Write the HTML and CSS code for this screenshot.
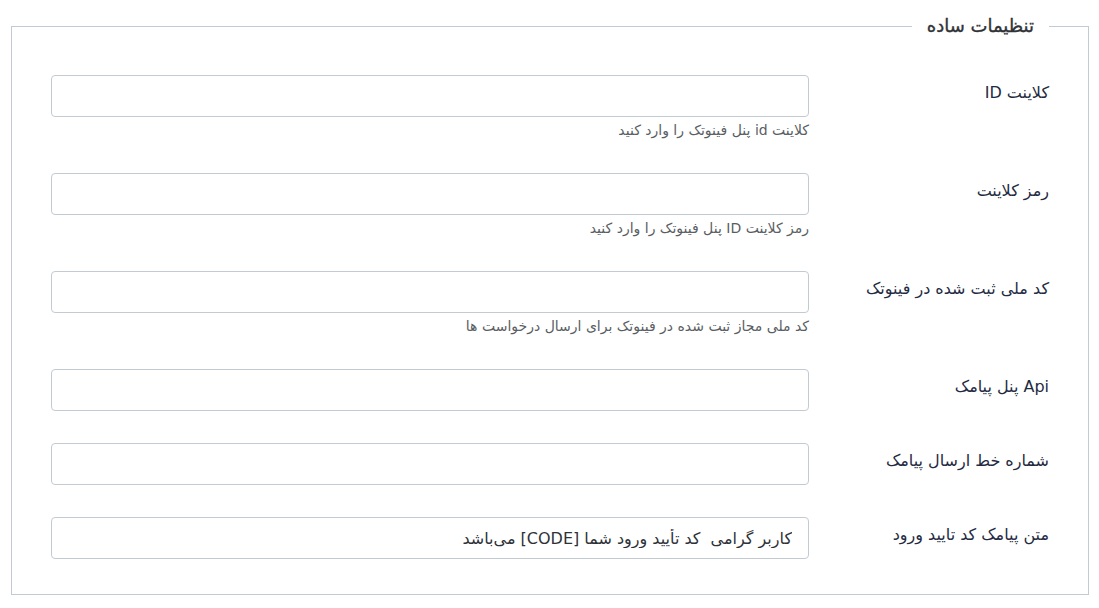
FILE: index.html
```html
<!DOCTYPE html>
<html lang="fa" dir="rtl">
<head>
<meta charset="utf-8">
<title>تنظیمات ساده</title>
<link rel="stylesheet" href="styles.css">
</head>
<body>
<div class="page">
  <fieldset class="box">
    <legend class="box-title">تنظیمات ساده</legend>

    <div class="row">
      <label class="row-label" for="f1">کلاینت ID</label>
      <div class="row-field">
        <input class="text-input" id="f1" type="text">
        <div class="help">کلاینت id پنل فینوتک را وارد کنید</div>
      </div>
    </div>

    <div class="row">
      <label class="row-label" for="f2">رمز کلاینت</label>
      <div class="row-field">
        <input class="text-input" id="f2" type="text">
        <div class="help">رمز کلاینت ID پنل فینوتک را وارد کنید</div>
      </div>
    </div>

    <div class="row">
      <label class="row-label" for="f3">کد ملی ثبت شده در فینوتک</label>
      <div class="row-field">
        <input class="text-input" id="f3" type="text">
        <div class="help">کد ملی مجاز ثبت شده در فینوتک برای ارسال درخواست ها</div>
      </div>
    </div>

    <div class="row">
      <label class="row-label" for="f4">Api پنل پیامک</label>
      <div class="row-field">
        <input class="text-input" id="f4" type="text">
      </div>
    </div>

    <div class="row">
      <label class="row-label" for="f5">شماره خط ارسال پیامک</label>
      <div class="row-field">
        <input class="text-input" id="f5" type="text">
      </div>
    </div>

    <div class="row">
      <label class="row-label" for="f6">متن پیامک کد تایید ورود</label>
      <div class="row-field">
        <input class="text-input" id="f6" type="text" value="کاربر گرامی  کد تأیید ورود شما [CODE] می‌باشد">
      </div>
    </div>
  </fieldset>
</div>
</body>
</html>
```
FILE: styles.css
```css
html, body {
  margin: 0;
  padding: 0;
  background: #ffffff;
}

body {
  font-family: "DejaVu Sans", "Noto Sans", sans-serif;
  color: #1f2b42;
}

.page {
  padding: 13px 10px 0 11px;
}

.box {
  margin: 0;
  border: 1px solid #c3cbd2;
  padding: 36px 39px 3px 39px;
  min-width: 0;
}

.box-title {
  padding: 0 15px;
  font-size: 18px;
  line-height: 26px;
  font-weight: normal;
  color: #2f3236;
  -webkit-text-stroke: 0.35px #2f3236;
}

.row {
  display: grid;
  grid-template-columns: 219px 1fr;
  column-gap: 21px;
  margin-bottom: 32px;
}

.row-label {
  font-size: 16px;
  line-height: 22px;
  padding-top: 7px;
  color: #1f2b42;
  text-align: right;
}

.row-field {
  display: flex;
  flex-direction: column;
}

.text-input {
  box-sizing: border-box;
  height: 42px;
  width: 100%;
  margin: 0;
  border: 1px solid #c3cbd2;
  border-radius: 4px;
  padding: 0 16px;
  font-family: "DejaVu Sans", "Noto Sans", sans-serif;
  font-size: 16px;
  color: #2e3238;
  background: #ffffff;
  direction: rtl;
  outline: none;
}

.help {
  margin-top: 3px;
  font-size: 14px;
  line-height: 21px;
  color: #5a5e63;
}
```
